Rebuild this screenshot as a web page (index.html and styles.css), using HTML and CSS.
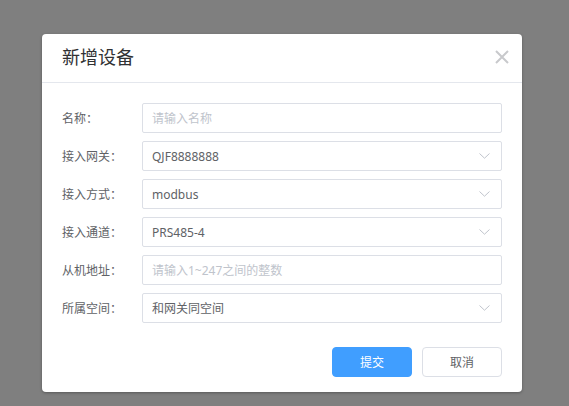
FILE: index.html
```html
<!DOCTYPE html>
<html lang="zh">
<head>
<meta charset="utf-8">
<link rel="stylesheet" href="styles.css">
</head>
<body>
<div class="overlay">
  <div class="dialog">
    <div class="dialog-header">
      <span class="dialog-title">新增设备</span>
      <button class="close" aria-label="关闭">
        <svg width="14" height="14" viewBox="0 0 14 14"><path d="M1 1L13 13M13 1L1 13" stroke="#c8c9cc" stroke-width="2" fill="none"/></svg>
      </button>
    </div>
    <div class="dialog-body">
      <div class="form-row">
        <label class="form-label">名称：</label>
        <div class="field"><span class="placeholder">请输入名称</span></div>
      </div>
      <div class="form-row">
        <label class="form-label">接入网关：</label>
        <div class="field select"><span class="value">QJF8888888</span><svg class="arrow" width="11" height="6" viewBox="0 0 11 6"><path d="M0.5 0.5L5.5 5.2L10.5 0.5" stroke="#c0c4cc" stroke-width="1" fill="none"/></svg></div>
      </div>
      <div class="form-row">
        <label class="form-label">接入方式：</label>
        <div class="field select"><span class="value">modbus</span><svg class="arrow" width="11" height="6" viewBox="0 0 11 6"><path d="M0.5 0.5L5.5 5.2L10.5 0.5" stroke="#c0c4cc" stroke-width="1" fill="none"/></svg></div>
      </div>
      <div class="form-row">
        <label class="form-label">接入通道：</label>
        <div class="field select"><span class="value">PRS485-4</span><svg class="arrow" width="11" height="6" viewBox="0 0 11 6"><path d="M0.5 0.5L5.5 5.2L10.5 0.5" stroke="#c0c4cc" stroke-width="1" fill="none"/></svg></div>
      </div>
      <div class="form-row">
        <label class="form-label">从机地址：</label>
        <div class="field"><span class="placeholder">请输入1~247之间的整数</span></div>
      </div>
      <div class="form-row">
        <label class="form-label">所属空间：</label>
        <div class="field select"><span class="value">和网关同空间</span><svg class="arrow" width="11" height="6" viewBox="0 0 11 6"><path d="M0.5 0.5L5.5 5.2L10.5 0.5" stroke="#c0c4cc" stroke-width="1" fill="none"/></svg></div>
      </div>
    </div>
    <div class="dialog-footer">
      <button class="btn btn-primary">提交</button>
      <button class="btn btn-default">取消</button>
    </div>
  </div>
</div>
</body>
</html>
```
FILE: styles.css
```css
* { box-sizing: border-box; }
html, body {
  margin: 0;
  padding: 0;
  height: 100%;
}
body {
  background: #7f7f7f;
  font-family: "Noto Sans", "Noto Sans CJK SC", sans-serif;
}
.overlay {
  padding-top: 34px;
  padding-left: 42px;
}
.dialog {
  width: 480px;
  background: #fff;
  border-radius: 4px;
  box-shadow: 0 1px 3px rgba(0,0,0,0.3);
}
.dialog-header {
  height: 49px;
  border-bottom: 1px solid #e4e7ed;
  display: flex;
  align-items: center;
  justify-content: space-between;
  padding: 0 13px 2px 20px;
}
.dialog-title {
  font-size: 18px;
  color: #303133;
  line-height: 24px;
}
.close {
  border: 0;
  background: none;
  padding: 0;
  width: 14px;
  height: 14px;
  display: block;
  margin-top: 0;
}
.close svg { display: block; }
.dialog-body {
  padding: 20px 20px 0 20px;
  display: flex;
  flex-direction: column;
  gap: 8px;
}
.form-row {
  display: flex;
  align-items: center;
  height: 30px;
}
.form-label {
  width: 80px;
  font-size: 12px;
  color: #606266;
}
.field {
  flex: 1;
  height: 30px;
  border: 1px solid #dcdfe6;
  border-radius: 2px;
  display: flex;
  align-items: center;
  justify-content: space-between;
  padding: 0 11px 0 9px;
  font-size: 12px;
}
.placeholder { color: #c0c4cc; }
.value { color: #606266; }
.arrow { display: block; }
.dialog-footer {
  display: flex;
  justify-content: flex-end;
  gap: 10px;
  padding: 24px 20px 15px 20px;
}
.btn {
  width: 80px;
  height: 30px;
  border-radius: 4px;
  font-size: 12px;
  font-family: "Noto Sans", "Noto Sans CJK SC", sans-serif;
  padding: 0;
}
.btn-primary {
  background: #409eff;
  border: 1px solid #409eff;
  color: #fff;
}
.btn-default {
  background: #fff;
  border: 1px solid #dcdfe6;
  color: #606266;
}
```
